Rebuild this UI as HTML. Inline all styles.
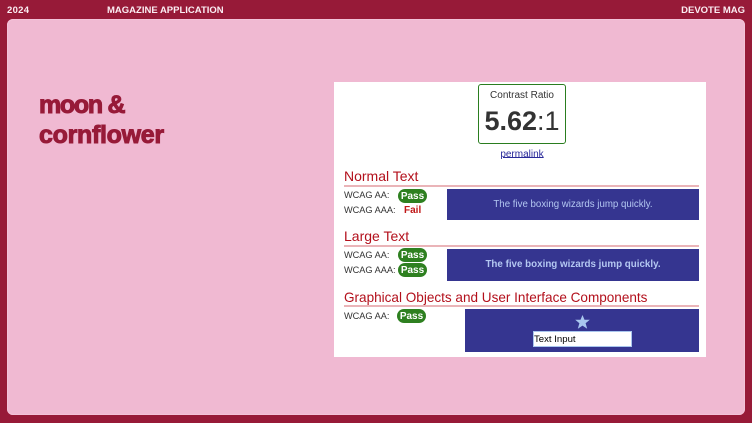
<!DOCTYPE html>
<html><head><meta charset="utf-8">
<style>
html,body{margin:0;padding:0}
body{width:752px;height:423px;overflow:hidden;background:#971a38;position:relative;font-family:"Liberation Sans",sans-serif}
.a{position:absolute;white-space:nowrap}
.hd{color:#fbeef3;font-weight:bold;font-size:9.5px;line-height:12px;top:5px}
.t{color:#971a38;font-weight:bold;font-size:25px;line-height:30px;left:39px;-webkit-text-stroke:1px #971a38}
.h{color:#b3101c;font-size:14px;line-height:17px;left:344px}
.r{height:2px;left:344px;width:355px;background:#eab4b8}
.l{color:#333;font-size:9.2px;line-height:12px;left:344px}
.p{background:#2e8020;color:#fff;font-weight:bold;font-size:10px;line-height:15px;height:14px;width:29px;border-radius:7px;text-align:center}
.b{background:#353590;color:#b4c8f2;text-align:center;font-size:9.7px}
</style></head><body>
<div class="a hd" style="left:7px;letter-spacing:.3px">2024</div>
<div class="a hd" style="left:107px">MAGAZINE APPLICATION</div>
<div class="a hd" style="right:7px">DEVOTE MAG</div>
<div class="a" style="left:7px;top:19px;width:738px;height:396px;background:#f0b9d2;border-radius:6px;box-shadow:inset 0 0 0 1px #f3c2d8"></div>
<div class="a t" style="top:90px;letter-spacing:-1.3px">moon &amp;</div>
<div class="a t" style="top:120px;letter-spacing:-.3px">cornflower</div>
<div class="a" style="left:334px;top:82px;width:372px;height:275px;background:#fff"></div>
<div class="a" style="left:478px;top:84px;width:86px;height:58px;border:1.5px solid #2a7d1f;border-radius:3px"></div>
<div class="a" style="left:478px;width:88px;top:89px;text-align:center;font-size:10px;line-height:13px;color:#333">Contrast Ratio</div>
<div class="a" style="left:478px;width:88px;top:104px;text-align:center;font-size:27px;line-height:34px;color:#333"><b>5.62</b>:1</div>
<div class="a" style="left:478px;width:88px;top:148px;text-align:center;font-size:10px;line-height:12px;color:#2a2a9a;text-decoration:underline;padding-top:0;margin-top:0"><span style="position:relative;top:1px">permalink</span></div>

<div class="a h" style="top:168px">Normal Text</div>
<div class="a r" style="top:185px"></div>
<div class="a l" style="top:189px">WCAG AA:</div>
<div class="a p" style="left:398px;top:189px">Pass</div>
<div class="a l" style="top:204px">WCAG AAA:</div>
<div class="a" style="left:404px;top:205px;color:#c01818;font-weight:bold;font-size:10px;line-height:12px">Fail</div>
<div class="a b" style="left:447px;top:189px;width:252px;height:31px;line-height:31px">The five boxing wizards jump quickly.</div>

<div class="a h" style="top:228px">Large Text</div>
<div class="a r" style="top:245px"></div>
<div class="a l" style="top:249px">WCAG AA:</div>
<div class="a p" style="left:398px;top:248px">Pass</div>
<div class="a l" style="top:264px">WCAG AAA:</div>
<div class="a p" style="left:398px;top:263px">Pass</div>
<div class="a b" style="left:447px;top:249px;width:252px;height:32px;line-height:32px;font-weight:bold;font-size:9.8px">The five boxing wizards jump quickly.</div>

<div class="a h" style="top:289px;font-size:13.55px">Graphical Objects and User Interface Components</div>
<div class="a r" style="top:305px"></div>
<div class="a l" style="top:310px">WCAG AA:</div>
<div class="a p" style="left:397px;top:309px">Pass</div>
<div class="a" style="left:465px;top:309px;width:234px;height:43px;background:#353590"></div>
<svg class="a" style="left:575px;top:315px" width="15" height="14" viewBox="0 0 15 14"><path d="M7.5 0L9.5 4.8H14.8L10.6 8.2L12.2 13.8L7.5 10.6L2.8 13.8L4.4 8.2L.2 4.8H5.5Z" fill="#a9c6ee"/></svg>
<div class="a" style="left:533px;top:331px;width:97px;height:14px;background:#fff;border:1px solid #a9c6ee;color:#000;font-size:9.6px;line-height:15px">Text Input</div>
</body></html>
